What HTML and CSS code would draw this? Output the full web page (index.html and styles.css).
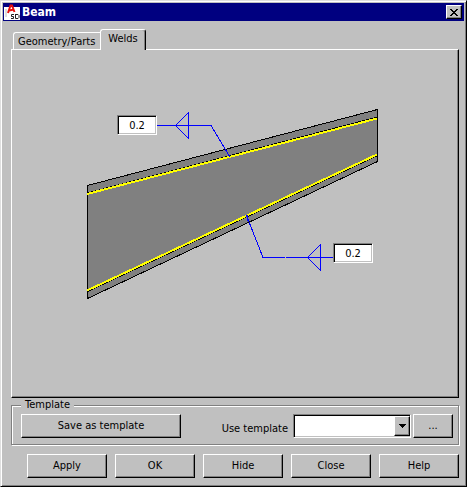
FILE: index.html
```html
<!DOCTYPE html>
<html lang="en">
<head>
<meta charset="utf-8">
<title>Beam</title>
<link rel="stylesheet" href="styles.css">
</head>
<body>
<main class="window">
  <header class="titlebar">
    <svg class="app-icon" width="16" height="16" viewBox="0 0 16 16" aria-hidden="true">
      <rect y="3" width="16" height="13" fill="#fff"/>
      <path d="M1 5h2v8H1z" fill="#ddd"/>
      <path d="M4 9 6.500 1.500h1.500L10.500 8M5 6.500l5-1" fill="none" stroke="#e8100c" stroke-width="2"/>
      <path d="M10 10.500H7.500v2H9.500v2H7M11.500 10v4.500H14l1-1v-2l-1-1h-2.500" fill="none" stroke="#222"/>
    </svg>
    <h1 class="title">Beam</h1>
    <button class="close" type="button" aria-label="Close window">
      <svg width="8" height="7" viewBox="0 0 8 7" shape-rendering="crispEdges" aria-hidden="true">
        <path d="M0 0h2v1h1v1h2V1h1V0h2v1H7v1H6v1H5v1h1v1h1v1h1v1H6V6H5V5H3v1H2v1H0V6h1V5h1V4h1V3H2V2H1V1H0z"/>
      </svg>
    </button>
  </header>

  <div class="content">
    <div class="tabs" role="tablist">
      <button class="tab" type="button" role="tab" aria-selected="false">Geometry/Parts</button>
      <button class="tab active" type="button" role="tab" aria-selected="true">Welds</button>
    </div>

    <section class="panel" role="tabpanel">
      <div class="diagram">
        <svg width="376" height="256" viewBox="12 50 376 256" shape-rendering="crispEdges" aria-hidden="true">
          <path d="M87.500 185.500 377.500 109.500V161.500L87.500 298.500z" fill="#808080" stroke="#000"/>
          <path d="M87.500 193 377.500 117M87.500 291.500 377.500 155.500" stroke="#000"/>
          <path d="M87 194 377 118.500M87 290.500 377 154.500" stroke="#ff0" stroke-width="2"/>
          <g fill="none" stroke="#00f">
            <path d="M157 125.500h54L230 157M188.500 112.500v26L175.500 125.500z"/>
            <path d="M333 257.500h-47M285 257.500h-22L246.500 215.500M247.500 215v6M320.500 244.500v26L307.500 257.500z"/>
          </g>
        </svg>
        <input class="weld weld-top" type="text" value="0.2" aria-label="Top weld size">
        <input class="weld weld-bottom" type="text" value="0.2" aria-label="Bottom weld size">
      </div>
    </section>

    <fieldset class="template">
      <legend>Template</legend>
      <div class="template-row">
        <button class="btn save" type="button">Save as template</button>
        <label class="use-label" for="use-template">Use template</label>
        <span class="combo">
          <select id="use-template"><option></option></select>
          <span class="arrow" aria-hidden="true"><svg width="7" height="4" viewBox="0 0 7 4" shape-rendering="crispEdges"><path d="M0 0h7v1H6v1H5v1H4v1H3V3H2V2H1V1H0z"/></svg></span>
        </span>
        <button class="btn more" type="button" aria-label="Browse templates">...</button>
      </div>
    </fieldset>

    <footer class="actions">
      <button class="btn" type="button">Apply</button>
      <button class="btn" type="button">OK</button>
      <button class="btn" type="button">Hide</button>
      <button class="btn" type="button">Close</button>
      <button class="btn" type="button">Help</button>
    </footer>
  </div>
</main>
</body>
</html>
```

FILE: styles.css
```css
* { box-sizing: border-box; }

body {
  margin: 0;
  background: #c0c0c0;
  color: #000;
  font: 11px/14px "DejaVu Sans Condensed", "DejaVu Sans", sans-serif;
}

button, input, select { font: inherit; color: inherit; }

.window {
  display: flex;
  flex-direction: column;
  min-height: 100vh;
  padding: 1px 2px 1px 1px;
  border: 1px solid;
  border-color: #dfdfdf #000 #000 #dfdfdf;
  box-shadow: inset 1px 1px #fff, inset -1px -1px #808080;
}

.titlebar {
  display: flex;
  align-items: center;
  height: 18px;
  margin: 1px 0 0 1px;
  padding: 0 2px 0 1px;
  background: #000080;
  color: #fff;
}

.title {
  flex: 1;
  margin: 0 0 0 2px;
  font-size: 12px;
  font-weight: bold;
}

.close {
  display: flex;
  align-items: center;
  justify-content: center;
  width: 16px;
  height: 14px;
  padding: 0;
}

.close, .btn, .arrow {
  background: #c0c0c0;
  border: 1px solid;
  border-color: #fff #000 #000 #fff;
  box-shadow: inset -1px -1px #808080;
}

.btn {
  height: 24px;
  padding: 0;
}

.content {
  display: flex;
  flex: 1;
  flex-direction: column;
  padding: 8px 5px 7px 9px;
}

.tabs {
  display: flex;
  align-items: flex-end;
  height: 20px;
  padding-left: 2px;
}

.tab {
  height: 17px;
  padding: 1px 5px 0 4px;
  background: #c0c0c0;
  border: 1px solid #fff;
  border-width: 1px 0 0 1px;
  border-radius: 3px 0 0 0;
}

.tab.active {
  z-index: 1;
  height: 21px;
  margin-bottom: -1px;
  padding: 0 7px 2px;
  border-right: 1px solid #000;
  border-radius: 3px 3px 0 0;
  box-shadow: inset -1px 0 #808080;
}

.panel {
  flex: 1;
  border: 1px solid;
  border-color: #fff #000 #000 #fff;
  box-shadow: inset -1px -1px #808080;
}

.diagram { position: relative; }

.diagram svg { display: block; }

.weld {
  position: absolute;
  width: 40px;
  height: 20px;
  padding: 0;
  background: #fff;
  border: 1px solid;
  border-color: #808080 #fff #fff #808080;
  box-shadow: inset 1px 1px #000, inset -1px -1px #c0c0c0;
  text-align: center;
}

.weld-top { left: 105px; top: 65px; }
.weld-bottom { left: 321px; top: 193px; }

.template {
  min-width: 0;
  margin: 0;
  padding: 2px 5px 6px 9px;
  border: 1px solid #808080;
  box-shadow: 1px 1px #fff, inset 1px 1px #fff;
}

.template legend {
  padding: 0 4px;
  background: #c0c0c0;
}

.template-row {
  display: flex;
  align-items: center;
}

.save { width: 160px; }

.use-label {
  margin: 6px 5px 0 auto;
}

.combo {
  position: relative;
  width: 118px;
  height: 24px;
}

.combo select {
  width: 100%;
  height: 100%;
  background: #fff;
  border: 1px solid;
  border-color: #808080 #fff #fff #808080;
  border-radius: 0;
  box-shadow: inset 1px 1px #000, inset -1px -1px #c0c0c0;
  appearance: none;
}

.arrow {
  position: absolute;
  top: 2px;
  right: 1px;
  bottom: 2px;
  display: flex;
  align-items: center;
  justify-content: center;
  width: 16px;
  pointer-events: none;
}

.more {
  width: 40px;
  margin-left: 2px;
}

.actions {
  display: grid;
  grid-template-columns: repeat(5, 1fr);
  gap: 8px;
  margin-top: 9px;
  padding-left: 16px;
}
```
